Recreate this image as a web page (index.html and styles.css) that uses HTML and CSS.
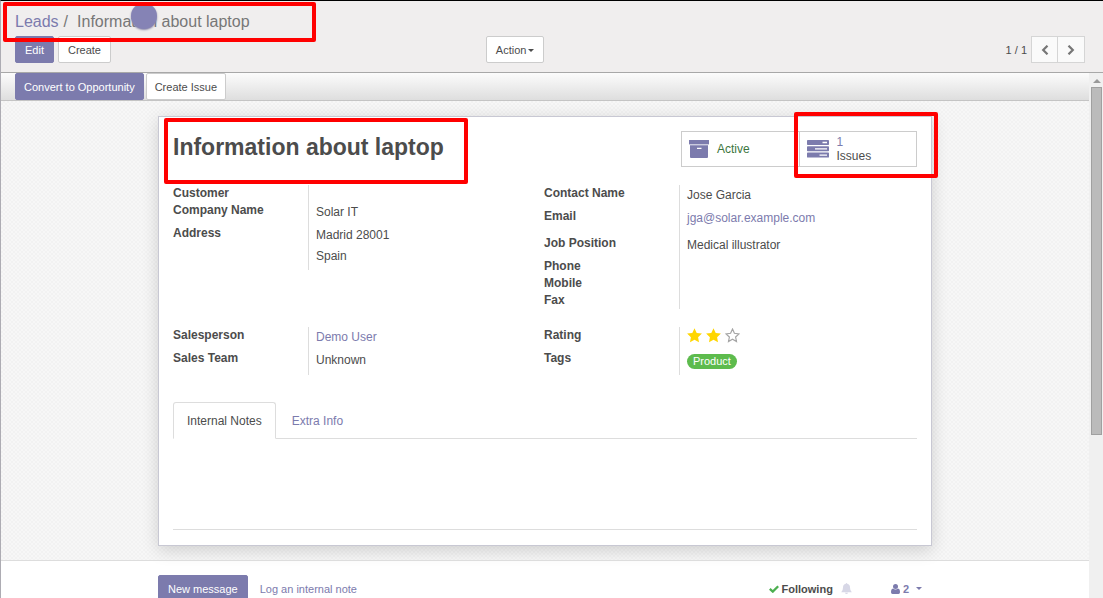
FILE: index.html
```html
<!DOCTYPE html>
<html lang="en">
<head>
<meta charset="utf-8">
<title>Information about laptop</title>
<link rel="stylesheet" href="styles.css">
</head>
<body>
<header class="control-panel">
  <nav class="breadcrumb" aria-label="Breadcrumb">
    <a href="#">Leads</a><span class="slash">/</span><span>Information about laptop</span>
    <span class="marker"></span>
    <span class="highlight highlight-breadcrumb"></span>
  </nav>
  <div class="toolbar">
    <div class="buttons">
      <button class="btn primary" type="button">Edit</button>
      <button class="btn" type="button">Create</button>
    </div>
    <div><button class="btn" type="button">Action<span class="caret"></span></button></div>
    <div class="pager">
      <span>1 / 1</span>
      <div class="pager-buttons">
        <button type="button" aria-label="Previous"><svg width="8" height="10" viewBox="0 0 8 10"><path d="M6.5 .7 2.200 5l4.300 4.300" fill="none" stroke="#777" stroke-width="2.2"/></svg></button>
        <button type="button" aria-label="Next"><svg width="8" height="10" viewBox="0 0 8 10"><path d="M1.500 .7l4.300 4.300-4.300 4.300" fill="none" stroke="#777" stroke-width="2.2"/></svg></button>
      </div>
    </div>
  </div>
</header>
<div class="main">
  <main class="content">
    <div class="statusbar">
      <button class="btn primary" type="button">Convert to Opportunity</button>
      <button class="btn" type="button">Create Issue</button>
    </div>
    <div class="sheet-bg">
      <section class="sheet">
        <div class="title-row">
          <div class="title">
            <h1>Information about laptop</h1>
            <span class="highlight highlight-title"></span>
          </div>
          <div class="stats">
            <button class="stat active" type="button">
              <svg width="20" height="18" viewBox="0 0 20 18" fill="#7c7bad"><path d="M0 0h20v4.4H0z"/><path fill-rule="evenodd" d="M1 5.2h18V17q0 1-1 1H2q-1 0-1-1zM8 7.8v1.3h4.5V7.8z"/></svg>
              <span>Active</span>
            </button>
            <button class="stat" type="button">
              <svg width="22" height="18" viewBox="0 0 22 18"><g fill="#7c7bad"><rect width="22" height="5" rx=".7"/><rect y="6.3" width="22" height="5" rx=".7"/><rect y="12.6" width="22" height="5" rx=".7"/></g><path d="M15.5 2.5H20M8 8.8h12M12.500 15.100H20" stroke="#fff" stroke-width="1.3"/></svg>
              <span><span class="count">1</span>Issues</span>
            </button>
            <span class="highlight highlight-issues"></span>
          </div>
        </div>
        <div class="groups">
          <dl class="group">
            <div class="row short"><dt>Customer</dt><dd></dd></div>
            <div class="row"><dt>Company Name</dt><dd>Solar IT</dd></div>
            <div class="row address"><dt>Address</dt><dd>Madrid 28001<br>Spain</dd></div>
          </dl>
          <dl class="group">
            <div class="row"><dt>Contact Name</dt><dd>Jose Garcia</dd></div>
            <div class="row tall"><dt>Email</dt><dd><a href="#">jga@solar.example.com</a></dd></div>
            <div class="row"><dt>Job Position</dt><dd>Medical illustrator</dd></div>
            <div class="row short"><dt>Phone</dt><dd></dd></div>
            <div class="row short"><dt>Mobile</dt><dd></dd></div>
            <div class="row short"><dt>Fax</dt><dd></dd></div>
          </dl>
          <dl class="group">
            <div class="row"><dt>Salesperson</dt><dd><a href="#">Demo User</a></dd></div>
            <div class="row last"><dt>Sales Team</dt><dd>Unknown</dd></div>
          </dl>
          <dl class="group">
            <div class="row"><dt>Rating</dt><dd>
              <span class="stars" role="img" aria-label="2 of 3 stars">
                <svg width="15" height="15" viewBox="0 0 15 15"><path fill="#ffd600" d="M7.500.2l2.200 4.700 5.200.7-3.800 3.600.9 5.100-4.500-2.500L3 14.300l.9-5.100L.1 5.600l5.200-.7z"/></svg>
                <svg width="15" height="15" viewBox="0 0 15 15"><path fill="#ffd600" d="M7.500.2l2.200 4.700 5.200.7-3.800 3.600.9 5.100-4.500-2.500L3 14.300l.9-5.100L.1 5.600l5.200-.7z"/></svg>
                <svg width="15" height="15" viewBox="0 0 15 15"><path fill="none" stroke="#a5a5a5" stroke-width="1.200" d="M7.500 1.100l1.900 4.200 4.600.6-3.400 3.100.9 4.500-4-2.200-4 2.200.9-4.500L1 5.900l4.600-.6z"/></svg>
              </span></dd></div>
            <div class="row last"><dt>Tags</dt><dd><span class="tag">Product</span></dd></div>
          </dl>
        </div>
        <div class="tabs" role="tablist">
          <button class="tab selected" type="button" role="tab" aria-selected="true">Internal Notes</button>
          <button class="tab" type="button" role="tab" aria-selected="false">Extra Info</button>
        </div>
        <div class="notes"></div>
      </section>
    </div>
    <section class="chatter">
      <div class="chatter-bar">
        <button class="btn primary" type="button">New message</button>
        <a href="#">Log an internal note</a>
        <div class="followers">
          <button class="following" type="button">
            <svg width="10" height="8" viewBox="0 0 10 8"><path d="M.8 3.800l3 2.800L9.200 1.200" fill="none" stroke="#4caf50" stroke-width="2.300"/></svg>
            Following
          </button>
          <svg width="11" height="11" viewBox="0 0 11 11"><path fill="#d7d7e6" d="M5.500 0q.7 0 .7.8Q9 1.400 9 4.500q0 3.400 1.800 4.700H.2Q2 7.900 2 4.500 2 1.400 4.800.8q0-.8.7-.8zM4 9.700h3Q6.800 11 5.500 11T4 9.700z"/></svg>
          <button class="people" type="button">
            <svg width="9" height="10" viewBox="0 0 9 10"><g fill="#7c7bad"><circle cx="4.500" cy="2.600" r="2.500"/><path d="M2 4.500q2.500 2 5 0 2 .4 2 3.700 0 1.800-1.500 1.800h-6Q0 10 0 8.200q0-3.300 2-3.700z"/></g></svg>
            2<span class="caret"></span>
          </button>
        </div>
      </div>
    </section>
  </main>
  <div class="scrollbar" aria-hidden="true">
    <svg width="8" height="4" viewBox="0 0 8 4"><path d="M0 4l4-4 4 4z" fill="#999"/></svg>
    <div class="thumb"></div>
  </div>
</div>
</body>
</html>
```
FILE: styles.css
```css
* { box-sizing: border-box; }
body {
  margin: 0;
  height: 100vh;
  display: flex;
  flex-direction: column;
  overflow: hidden;
  border-top: 1px solid #000;
  border-left: 1px solid #adacb3;
  background: #fff;
  color: #4c4c4c;
  font: 11px/14px "Liberation Sans", Arial, sans-serif;
}
a { color: #7c7bad; text-decoration: none; }
button { font: inherit; color: inherit; cursor: pointer; }
svg { display: block; flex: none; }

.control-panel {
  flex: none;
  padding: 11px 18px 9px 14px;
  background: #f0eeee;
  border-bottom: 1px solid #a8a8a8;
}
.breadcrumb {
  position: relative;
  display: flex;
  font-size: 16px;
  line-height: 20px;
  margin-bottom: 4px;
  color: #777;
}
.slash { margin: 0 9px 0 5px; }
.marker {
  position: absolute;
  left: 116px;
  top: -9px;
  width: 26px;
  height: 26px;
  border-radius: 50%;
  background: #8583b5;
  box-shadow: 0 1px 2px #8886a8;
}
.highlight {
  position: absolute;
  border: 4px solid #f00;
  border-radius: 2px;
  pointer-events: none;
}
.highlight-breadcrumb { left: -12px; top: -10px; width: 313px; height: 40px; }
.toolbar {
  display: grid;
  grid-template-columns: 44% 1fr auto;
  align-items: center;
}
.buttons { display: flex; gap: 4px; }
.btn {
  height: 27px;
  padding: 0 9px;
  border: 1px solid #ccc;
  border-radius: 2px;
  background: #fff;
  white-space: nowrap;
}
.btn.primary { background: #7c7bad; border-color: #7c7bad; color: #fff; }
.caret {
  display: inline-block;
  margin-left: 2px;
  vertical-align: middle;
  border: 3px solid transparent;
  border-top-color: currentColor;
  border-bottom: 0;
}
.pager { display: flex; align-items: center; gap: 4px; }
.pager-buttons { display: flex; }
.pager-buttons button {
  width: 27px;
  height: 27px;
  padding: 0;
  display: grid;
  place-items: center;
  border: 1px solid #d5d5d5;
  background: #fafafa;
}
.pager-buttons button + button { border-left: 0; }

.main { flex: 1; min-height: 0; display: flex; }
.content { flex: 1; min-width: 0; overflow: hidden; }
.statusbar {
  display: flex;
  gap: 2px;
  padding-left: 14px;
  border-bottom: 1px solid #c4c4c4;
  background: linear-gradient(#fcfcfc, #dedede);
}
.statusbar .btn { padding: 0 8px; }
.sheet-bg {
  padding: 15px 16px 14px;
  background: repeating-conic-gradient(#f2f2f2 0 25%, #f7f7f7 0 50%) 0 0 / 4px 4px;
}
.sheet {
  max-width: 774px;
  margin: 0 auto;
  padding: 14px 14px 15px;
  background: #fff;
  border: 1px solid #c8c8d3;
  box-shadow: 0 4px 16px rgba(0, 0, 0, .16);
  font-size: 12px;
}
.title-row { display: flex; justify-content: space-between; margin-bottom: 18px; }
.title { position: relative; }
h1 { margin: 0; font-size: 23px; line-height: 32px; }
.highlight-title { left: -9px; top: -13px; width: 304px; height: 66px; }
.stats { position: relative; display: flex; width: 236px; }
.stat {
  flex: 1;
  height: 36px;
  padding: 0 7px;
  display: flex;
  align-items: center;
  gap: 8px;
  border: 1px solid #ccc;
  background: #fff;
  text-align: left;
}
.stat + .stat { border-left: 0; }
.stat.active { color: #3c763d; }
.count { display: block; color: #7c7bad; }
.highlight-issues { right: -21px; top: -19px; width: 144px; height: 66px; }

.groups {
  display: grid;
  grid-template-columns: 1fr 1fr;
  row-gap: 18px;
  align-items: start;
  padding-right: 2px;
}
.group { margin: 0; }
.row { display: flex; min-height: 23px; }
.row.short { min-height: 17px; }
.row.tall { min-height: 27px; }
.row.last { min-height: 25px; }
.row.address { min-height: 45px; }
dt {
  width: 136px;
  border-right: 1px solid #ddd;
  font-weight: bold;
  line-height: 17px;
}
dd { margin: 0; padding-left: 7px; line-height: 21px; }
.stars { display: flex; gap: 4px; padding-top: 1px; }
.tag {
  display: block;
  margin-top: 4px;
  padding: 0 6px;
  border-radius: 8px;
  background: #5dbb4d;
  color: #fff;
  font-size: 11px;
  line-height: 15px;
}
.tabs { display: flex; gap: 2px; margin-top: 27px; border-bottom: 1px solid #ddd; }
.tab {
  height: 37px;
  margin-bottom: -1px;
  padding: 0 13px;
  border: 1px solid transparent;
  border-radius: 3px 3px 0 0;
  background: none;
  color: #7c7bad;
}
.tab.selected { border-color: #ddd; border-bottom-color: #fff; background: #fff; color: #4c4c4c; }
.notes { height: 91px; border-bottom: 1px solid #ddd; }

.chatter { padding: 14px 16px 0; border-top: 1px solid #ddd; }
.chatter-bar { max-width: 774px; margin: 0 auto; display: flex; align-items: center; gap: 12px; }
.followers { display: flex; align-items: center; gap: 8px; margin-left: auto; padding-right: 10px; }
.followers button {
  display: flex;
  align-items: center;
  gap: 3px;
  padding: 0;
  border: 0;
  background: none;
  font-weight: bold;
}
.followers .people { margin-left: 31px; color: #7c7bad; }
.people .caret { margin-left: 4px; }

.scrollbar {
  flex: none;
  width: 14px;
  padding: 6px 1px 0 2px;
  background: #f0f0f0;
  display: flex;
  flex-direction: column;
  align-items: center;
  gap: 4px;
}
.thumb { width: 100%; height: 67%; border: 1px solid #a0a0a0; background: #bbb; }
```
